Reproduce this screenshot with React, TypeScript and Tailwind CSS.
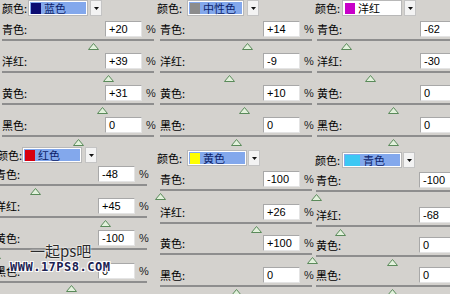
import React from 'react';

type PanelDef = {
  name: string;
  swatch: string;
  swatchW: string;
  active: boolean;
  pt: string;
  headX: string;
  headLabelW: string;
  ddW: string;
  arrowGap: string;
  rowX: string;
  values: [string, number][];
  mts: string[];
};

const LABELS = ['青色:', '洋红:', '黄色:', '黑色:'];
const TRACK_W = 152;

const panels: PanelDef[] = [
  {
    name: '蓝色', swatch: '#0c0c72', swatchW: 'w-[10px]', active: true,
    pt: 'pt-0', headX: 'pl-[2px]', headLabelW: 'w-[26px]', ddW: 'w-[60px]', arrowGap: 'ml-[2px]',
    rowX: 'pl-[2px]',
    values: [['+20', 20], ['+39', 39], ['+31', 31], ['0', 0]],
    mts: ['mt-[5px]', 'mt-[4px]', 'mt-[4px]', 'mt-[4px]'],
  },
  {
    name: '中性色', swatch: '#8c8c8c', swatchW: 'w-[10px]', active: true,
    pt: 'pt-0', headX: 'pl-[7px]', headLabelW: 'w-[30px]', ddW: 'w-[57px]', arrowGap: 'ml-[3px]',
    rowX: 'pl-[10px]',
    values: [['+14', 14], ['-9', -9], ['+10', 10], ['0', 0]],
    mts: ['mt-[5px]', 'mt-[4px]', 'mt-[4px]', 'mt-[4px]'],
  },
  {
    name: '洋红', swatch: '#c800c8', swatchW: 'w-[10px]', active: false,
    pt: 'pt-0', headX: 'pl-[15px]', headLabelW: 'w-[27px]', ddW: 'w-[60px]', arrowGap: 'ml-[2px]',
    rowX: 'pl-[17px]',
    values: [['-62', -62], ['-30', -30], ['0', 0], ['0', 0]],
    mts: ['mt-[5px]', 'mt-[4px]', 'mt-[4px]', 'mt-[4px]'],
  },
  {
    name: '红色', swatch: '#d8000f', swatchW: 'w-[10px]', active: true,
    pt: 'pt-[6px]', headX: '-ml-[3px]', headLabelW: 'w-[25px]', ddW: 'w-[60px]', arrowGap: 'ml-[3px]',
    rowX: '-ml-[5px]',
    values: [['-48', -48], ['+45', 45], ['-100', -100], ['0', 0]],
    mts: ['mt-[3px]', 'mt-[4px]', 'mt-[4px]', 'mt-[5px]'],
  },
  {
    name: '黄色', swatch: '#ffff00', swatchW: 'w-[10px]', active: true,
    pt: 'pt-[9px]', headX: 'pl-[7px]', headLabelW: 'w-[30px]', ddW: 'w-[60px]', arrowGap: 'ml-[1px]',
    rowX: 'pl-[10px]',
    values: [['-100', -100], ['+26', 26], ['+100', 100], ['0', 0]],
    mts: ['mt-[5px]', 'mt-[5px]', 'mt-[3px]', 'mt-[4px]'],
  },
  {
    name: '青色', swatch: '#3cc8f4', swatchW: 'w-[15px]', active: true,
    pt: 'pt-[11px]', headX: 'pl-[15px]', headLabelW: 'w-[27px]', ddW: 'w-[60px]', arrowGap: 'ml-[1px]',
    rowX: 'pl-[16px]',
    values: [['-100', -100], ['-68', -68], ['0', 0], ['0', 0]],
    mts: ['mt-[4px]', 'mt-[7px]', 'mt-[2px]', 'mt-[2px]'],
  },
];

const cjk = "font-['Noto_Sans_CJK_SC','Noto_Sans',sans-serif]";
const num = "font-['Liberation_Sans','Arial',sans-serif]";

function Thumb({ v }: { v: number }) {
  const left = ((v + 100) / 200) * TRACK_W - 5;
  return (
    <svg className="absolute top-[2px]" style={{ left }} width="11" height="7" viewBox="0 0 11 7">
      <polygon points="5.5,0.5 10.5,6.5 0.5,6.5" fill="#e2f1dc" stroke="#5a8a5a" strokeWidth="1" />
    </svg>
  );
}

function Panel({ p }: { p: PanelDef }) {
  return (
    <div className={`flex flex-col ${p.pt}`}>
      <div className={`flex items-center h-[16px] ${p.headX}`}>
        <span className={`${p.headLabelW} shrink-0 whitespace-nowrap text-[11px] leading-none text-black ${cjk}`}>颜色:</span>
        <div className={`${p.ddW} h-[16px] shrink-0 border border-[#b8b8b8] bg-white p-[1px] flex`}>
          <div className={`flex-1 flex items-center ${p.active ? 'bg-[#83a8ec]' : 'bg-white'}`}>
            <span className={`${p.swatchW} h-[11px] ml-[1px] shrink-0`} style={{ background: p.swatch }} />
            <span className={`ml-[3px] whitespace-nowrap text-[11px] leading-none ${p.active ? 'text-[#0d1f6a]' : 'text-black'} ${cjk}`}>
              {p.name}
            </span>
          </div>
        </div>
        <div className={`${p.arrowGap} w-[12px] h-[16px] shrink-0 bg-[#f3f3f3] border border-[#c4c4c4] flex items-center justify-center`}>
          <svg width="5" height="3" viewBox="0 0 5 3">
            <polygon points="0,0 5,0 2.5,3" fill="#111" />
          </svg>
        </div>
      </div>
      <div className={`flex flex-col ${p.rowX}`}>
        {p.values.map(([text, v], i) => (
          <div key={i} className={p.mts[i]}>
            <div className="flex items-center h-[16px]">
              <span className={`w-[103px] shrink-0 whitespace-nowrap text-[11px] leading-none text-black ${cjk}`}>{LABELS[i]}</span>
              <div className={`w-[37px] h-[16px] shrink-0 bg-white border border-t-[#a8a8a8] border-l-[#a8a8a8] border-r-[#e4e4e4] border-b-[#e4e4e4] pl-[3px] flex items-center text-[11px] leading-none text-black ${num}`}>
                {text}
              </div>
              <span className={`ml-[4px] text-[11px] leading-none text-[#222] ${num}`}>%</span>
            </div>
            <div className="relative mt-[2px] h-[10px] w-[152px] border-t-2 border-t-[#8e8e8e]">
              <Thumb v={v} />
            </div>
          </div>
        ))}
      </div>
    </div>
  );
}

export default function App() {
  return (
    <div className="relative w-[450px] h-[294px] overflow-hidden bg-[#d4d2ce]">
      <div className="grid grid-cols-[150px_150px_150px] grid-rows-[141px_153px]">
        {panels.map((p, i) => (
          <Panel key={i} p={p} />
        ))}
      </div>
      {/* watermark */}
      <div className="absolute left-[30px] top-[243px] text-[15px] leading-none text-[#2a2a2a] font-['Noto_Sans_CJK_SC',sans-serif] [text-shadow:0_0_2px_#fff,0_0_2px_#fff]">
        一起ps吧
      </div>
      <div className="absolute left-[10px] top-[261px] text-[12px] leading-none font-bold tracking-[0.5px] text-[#1c2252] font-['DejaVu_Sans_Mono',monospace] [text-shadow:1px_1px_0_#fff,-1px_-1px_0_#fff,1px_-1px_0_#fff,-1px_1px_0_#fff]">
        WWW.17PS8.COM
      </div>
    </div>
  );
}
